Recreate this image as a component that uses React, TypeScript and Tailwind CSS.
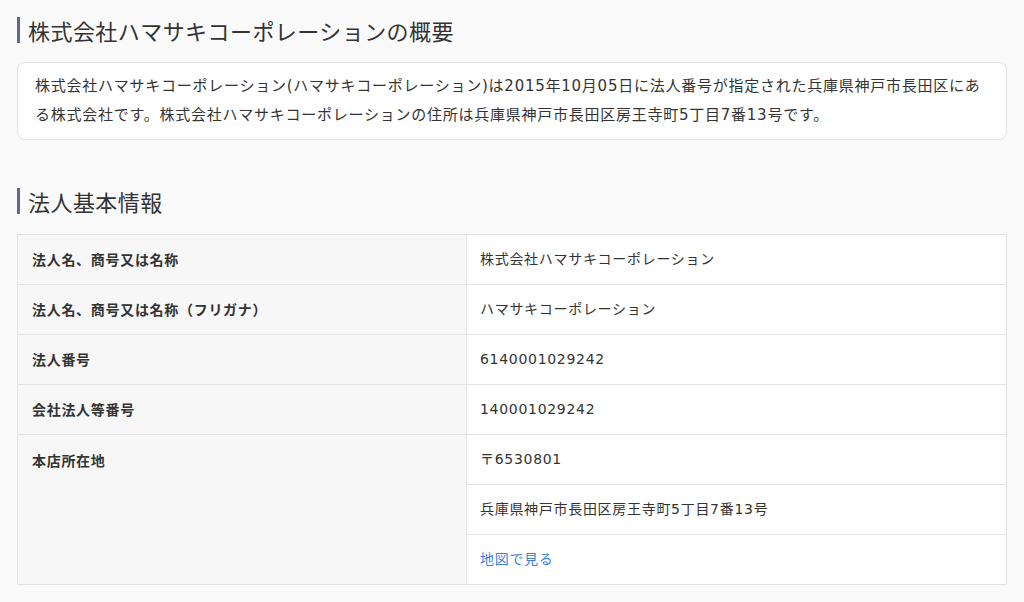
const font = { fontFamily: '"DejaVu Sans", "Noto Sans CJK JP", sans-serif' }
const cjk = { fontFamily: '"Noto Sans CJK JP", sans-serif' }

function Heading({ children }: { children: React.ReactNode }) {
  return (
    <h2
      className="border-l-[3px] border-[#5b6b8c] pl-[8px] text-[22px] leading-[26px] font-normal tracking-[0.02em] text-[#333]"
      style={cjk}
    >
      {children}
    </h2>
  )
}

const rows = [
  { label: '法人名、商号又は名称', value: '株式会社ハマサキコーポレーション' },
  { label: '法人名、商号又は名称（フリガナ）', value: 'ハマサキコーポレーション' },
  { label: '法人番号', value: '6140001029242' },
  { label: '会社法人等番号', value: '140001029242' },
]

export default function App() {
  return (
    <main className="min-h-screen bg-[#fafafa] px-[17px] pt-[17px] text-[#333]" style={font}>
      <Heading>株式会社ハマサキコーポレーションの概要</Heading>
      <div className="mt-[19px] rounded-lg border border-[#e2e2e2] bg-white px-[17px] py-[9px] text-[15px] leading-[29px] tracking-[0.05em]">
        株式会社ハマサキコーポレーション(ハマサキコーポレーション)は2015年10月05日に法人番号が指定された兵庫県神戸市長田区にある株式会社です。株式会社ハマサキコーポレーションの住所は兵庫県神戸市長田区房王寺町5丁目7番13号です。
      </div>

      <div className="mt-[48px]">
        <Heading>法人基本情報</Heading>
      </div>

      <table className="mt-[20px] w-full border-collapse text-[14px] tracking-[0.05em]">
        <tbody>
          {rows.map((r) => (
            <tr key={r.label}>
              <th
                className="h-[50px] w-[449px] border border-[#e3e3e3] bg-[#f7f7f7] px-[14px] text-left font-bold align-middle"
                style={cjk}
              >
                {r.label}
              </th>
              <td className="h-[50px] border border-[#e3e3e3] bg-white px-[13px] align-middle">{r.value}</td>
            </tr>
          ))}
          <tr>
            <th
              rowSpan={3}
              className="w-[449px] border border-[#e3e3e3] bg-[#f7f7f7] px-[14px] pt-[15px] text-left align-top font-bold"
              style={cjk}
            >
              本店所在地
            </th>
            <td className="h-[50px] border border-[#e3e3e3] bg-white px-[13px]">〒6530801</td>
          </tr>
          <tr>
            <td className="h-[50px] border border-[#e3e3e3] bg-white px-[13px]">兵庫県神戸市長田区房王寺町5丁目7番13号</td>
          </tr>
          <tr>
            <td className="h-[50px] border border-[#e3e3e3] bg-white px-[13px]">
              <a href="#" className="text-[#3b82e0]">地図で見る</a>
            </td>
          </tr>
        </tbody>
      </table>
    </main>
  )
}
